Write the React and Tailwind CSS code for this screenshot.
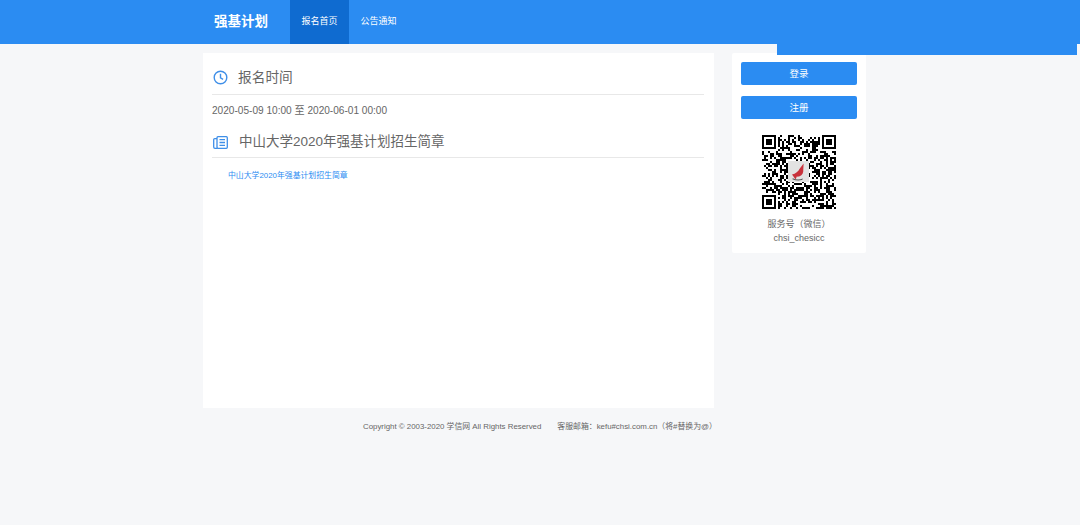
const font = { fontFamily: '"Liberation Sans", "Noto Sans CJK SC", sans-serif' };

// finder squares + seeded noise, close enough for a QR at this size
function QrCode() {
  const n = 37;
  const cells = [];
  let seed = 11;
  const next = () => {
    seed = (seed * 1103515245 + 12345) & 0x7fffffff;
    return (seed >> 16) % 100 < 52;
  };
  const inFinder = (x, y) =>
    (x < 8 && y < 8) || (x >= n - 8 && y < 8) || (x < 8 && y >= n - 8);
  for (let y = 0; y < n; y++) {
    for (let x = 0; x < n; x++) {
      const on = next();
      if (!inFinder(x, y) && on) {
        cells.push(<rect key={`${x}-${y}`} x={x} y={y} width="1" height="1" />);
      }
    }
  }
  const finder = (x, y) => (
    <g key={`f${x}${y}`}>
      <rect x={x} y={y} width="7" height="7" />
      <rect x={x + 1} y={y + 1} width="5" height="5" fill="#fff" />
      <rect x={x + 2} y={y + 2} width="3" height="3" />
    </g>
  );
  return (
    <svg width="74" height="74" viewBox="0 0 37 37" fill="#000" className="block">
      <g shapeRendering="crispEdges">
        {cells}
        {finder(0, 0)}
        {finder(30, 0)}
        {finder(0, 30)}
      </g>
      <rect x="13" y="13" width="10.5" height="10.5" fill="#e2e2e2" />
      <path d="M15 19.8c1.8-.4 3.2-1.6 4-3.2l1.8-2.4-.2 4.2c-.2 1.7-1.6 2.6-3.2 2.4l-.6 1.4z" fill="#c8323c" />
      <path d="M15.4 21.6c1.6.8 3.4.8 5 .2l-.2.6c-1.6.5-3.4.4-5-.3z" fill="#555" />
    </svg>
  );
}

function ClockIcon() {
  return (
    <svg width="15" height="15" viewBox="0 0 15 15" fill="none" stroke="#3f8fe8" strokeWidth="1.4">
      <circle cx="7.5" cy="7.5" r="6.3" />
      <path d="M7.5 3.8v4l2.6 1.5" />
    </svg>
  );
}

function NewsIcon() {
  return (
    <svg width="15" height="13" viewBox="0 0 15 13" fill="none" stroke="#3f8fe8" strokeWidth="1.3">
      <rect x="4" y="0.7" width="10.3" height="11.6" rx="1" />
      <path d="M4 2.6H1.7a1 1 0 0 0-1 1v7.4a1.3 1.3 0 0 0 1.3 1.3h2.6" />
      <path d="M6.5 3.6h5.5M6.5 6.5h5.5M6.5 9.4h5.5" />
    </svg>
  );
}

export default function App() {
  return (
    <div className="relative min-h-screen bg-[#f6f7f9] text-[#666]" style={font}>
      <header className="h-[44px] bg-[#2b8cf2] pl-[214px] flex items-stretch text-white">
        <div className="w-[76px] flex items-center text-[13.5px] font-bold">强基计划</div>
        <div className="w-[59px] bg-[#0f6bd0] flex items-center justify-center text-[9px]">报名首页</div>
        <div className="w-[59px] flex items-center justify-center text-[9px]">公告通知</div>
      </header>

      <div className="absolute left-[777px] top-[44px] w-[300px] h-[11px] bg-[#2b8cf2]" />

      <div className="flex pl-[203px] pt-[9px]">
        <main className="w-[511px] h-[355px] bg-white pl-[9px] pr-[10px] shrink-0">
          <div className="h-[42px] pt-[8px] flex items-center border-b border-[#e8e8e8] pl-[1px]">
            <ClockIcon />
            <h2 className="ml-[10px] pt-[2px] text-[13.7px] text-[#666]">报名时间</h2>
          </div>
          <p className="h-[31px] flex items-center text-[10.1px] text-[#666]">2020-05-09 10:00 至 2020-06-01 00:00</p>
          <div className="h-[32px] pt-[2px] flex items-center border-b border-[#e8e8e8] pl-[1px]">
            <NewsIcon />
            <h2 className="ml-[11px] text-[13.5px] text-[#666]">中山大学2020年强基计划招生简章</h2>
          </div>
          <a className="block mt-[11px] ml-[16px] text-[7.87px] leading-[13px] text-[#2b8cf2]">中山大学2020年强基计划招生简章</a>
        </main>

        <aside className="ml-[18px] w-[134px] h-[200px] bg-white rounded-[2px] flex flex-col items-center pt-[9px] shrink-0">
          <button className="w-[116px] h-[23px] pt-[1px] rounded-[2px] bg-[#2b8cf2] text-white text-[9.5px]">登录</button>
          <button className="mt-[11px] w-[116px] h-[23px] pt-[1px] rounded-[2px] bg-[#2b8cf2] text-white text-[9.5px]">注册</button>
          <div className="mt-[16px]">
            <QrCode />
          </div>
          <p className="mt-[9px] text-[9px] leading-[12px] text-[#666]">服务号（微信）</p>
          <p className="mt-[2px] text-[9px] leading-[12px] text-[#666]">chsi_chesicc</p>
        </aside>
      </div>

      <footer className="flex pl-[363px] pt-[13px] text-[7.86px] leading-[12px] text-[#666]">
        <span>Copyright © 2003-2020 学信网 All Rights Reserved</span>
        <span className="ml-[16px]">客服邮箱：kefu#chsi.com.cn（将#替换为@）</span>
      </footer>
    </div>
  );
}
